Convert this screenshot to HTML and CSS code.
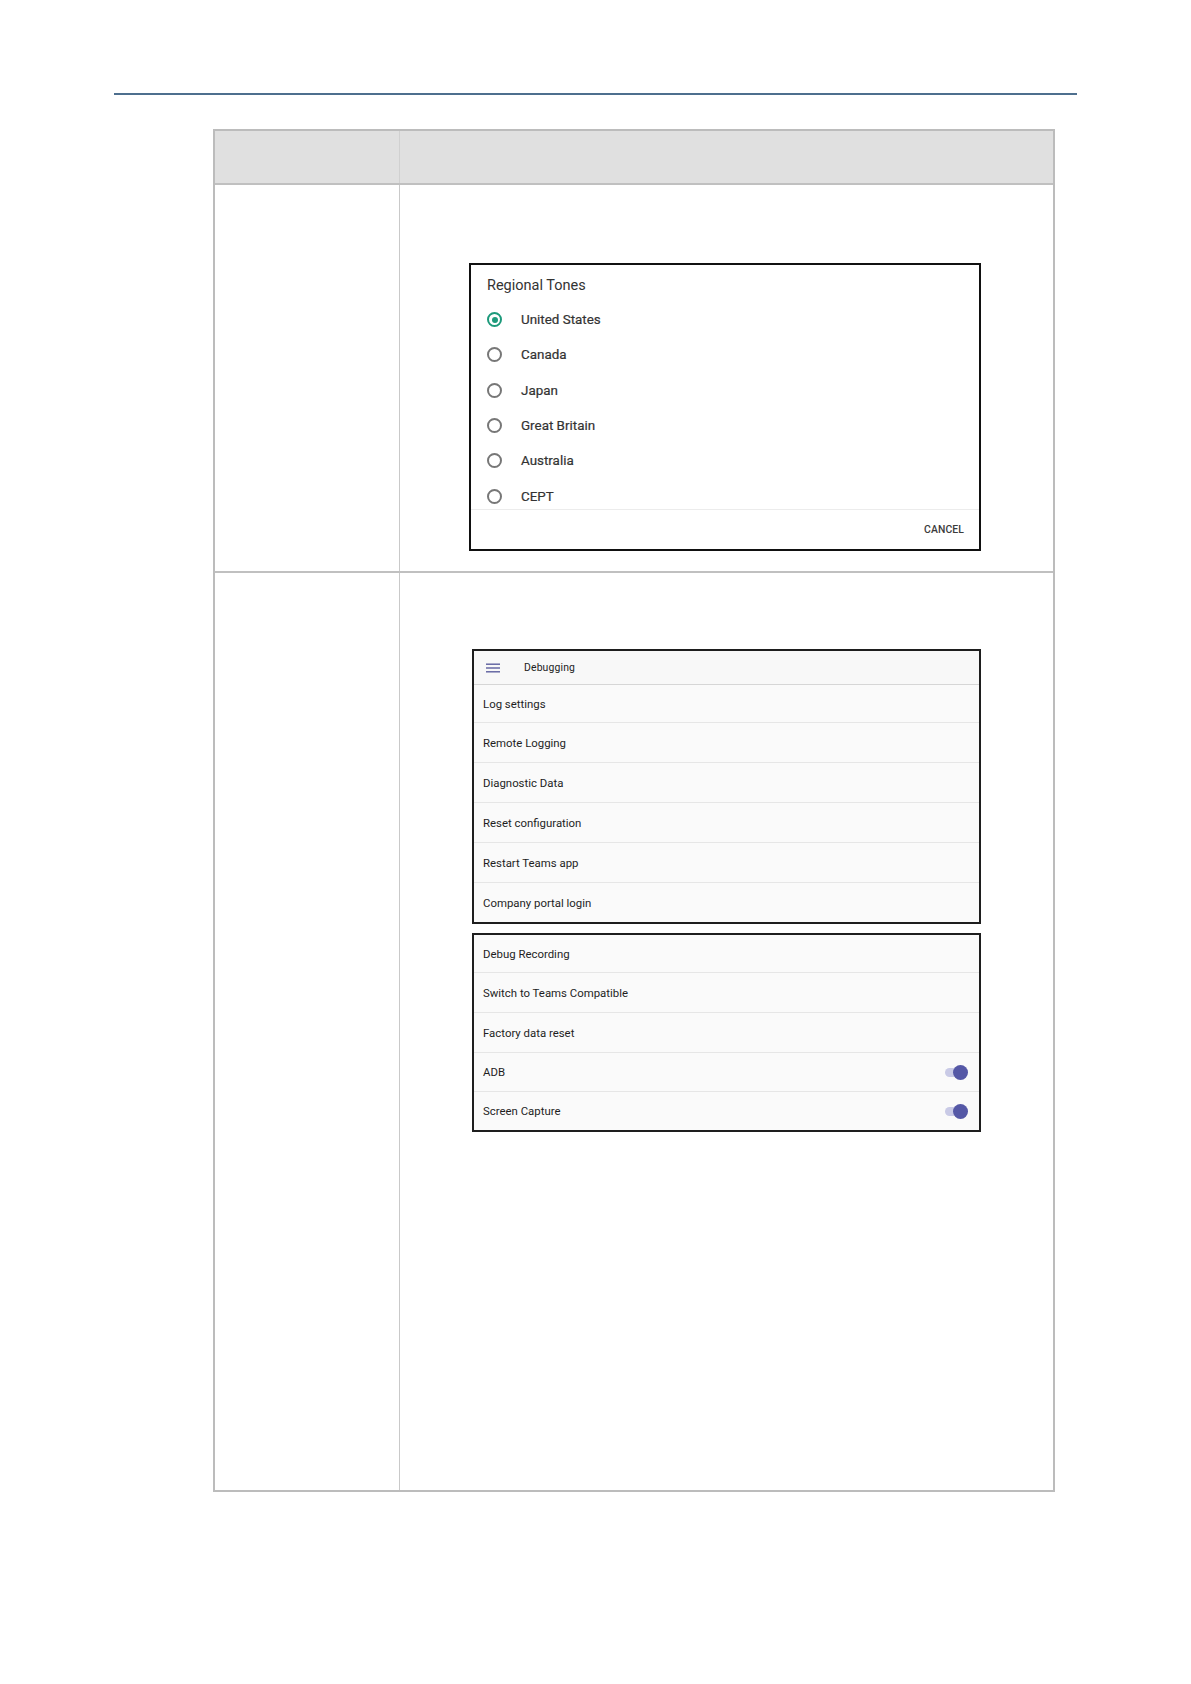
FILE: index.html
```html
<!DOCTYPE html>
<html lang="en">
<head>
<meta charset="utf-8">
<title>Regional Tones / Debugging</title>
<link rel="stylesheet" href="styles.css">
</head>
<body>
<div class="page">
  <div class="rule"></div>
  <div class="table">
    <div class="row head">
      <div class="cell c1"></div>
      <div class="cell c2"></div>
    </div>
    <div class="row r1">
      <div class="cell c1"></div>
      <div class="cell c2">
        <div class="dialog">
          <div class="d-title">Regional Tones</div>
          <div class="d-list">
            <div class="opt"><span class="radio on"></span><span class="opt-text">United States</span></div>
            <div class="opt"><span class="radio"></span><span class="opt-text">Canada</span></div>
            <div class="opt"><span class="radio"></span><span class="opt-text">Japan</span></div>
            <div class="opt"><span class="radio"></span><span class="opt-text">Great Britain</span></div>
            <div class="opt"><span class="radio"></span><span class="opt-text">Australia</span></div>
            <div class="opt"><span class="radio"></span><span class="opt-text">CEPT</span></div>
          </div>
          <div class="d-foot"><span class="cancel">CANCEL</span></div>
        </div>
      </div>
    </div>
    <div class="row r2">
      <div class="cell c1"></div>
      <div class="cell c2">
        <div class="panel">
          <div class="p-head">
            <svg class="burger" width="14" height="10" viewBox="0 0 14 10"><rect x="0" y="0.5" width="14" height="1.4" fill="#5d5f9e"/><rect x="0" y="4.3" width="14" height="1.4" fill="#5d5f9e"/><rect x="0" y="8.1" width="14" height="1.4" fill="#5d5f9e"/></svg>
            <span class="p-title">Debugging</span>
          </div>
          <div class="item first">Log settings</div>
          <div class="item">Remote Logging</div>
          <div class="item">Diagnostic Data</div>
          <div class="item">Reset configuration</div>
          <div class="item">Restart Teams app</div>
          <div class="item last">Company portal login</div>
        </div>
        <div class="panel second">
          <div class="item first">Debug Recording</div>
          <div class="item">Switch to Teams Compatible</div>
          <div class="item">Factory data reset</div>
          <div class="item tall"><span>ADB</span><span class="toggle"><span class="knob"></span></span></div>
          <div class="item last"><span>Screen Capture</span><span class="toggle"><span class="knob"></span></span></div>
        </div>
      </div>
    </div>
  </div>
</div>
</body>
</html>
```

FILE: styles.css
```css
html, body {
  margin: 0;
  padding: 0;
  background: #ffffff;
}

.page {
  width: 1191px;
  min-height: 1684px;
  padding-top: 93px;
  box-sizing: border-box;
  font-family: Roboto, "Liberation Sans", Arial, sans-serif;
}

.rule {
  margin-left: 114px;
  width: 963px;
  height: 2px;
  background: #4e6f8e;
}

.table {
  margin: 34px 0 0 213px;
  width: 842px;
  box-sizing: border-box;
  border: 2px solid #bcbcbc;
}

.row {
  display: grid;
  grid-template-columns: 185px 1fr;
}

.cell.c1 {
  border-right: 1px solid #c9c9c9;
}

.head {
  height: 54px;
  box-sizing: border-box;
  background: #e0e0e0;
  border-bottom: 2px solid #c0c0c0;
}

.head .c1 {
  border-right-color: #d0d0d0;
}

.r1 {
  height: 388px;
  box-sizing: border-box;
  border-bottom: 2px solid #c0c0c0;
}

.r1 .c2 {
  padding: 78px 0 0 69px;
}

.r2 {
  height: 917px;
}

.r2 .c2 {
  padding: 76px 0 0 72px;
}

/* Regional tones dialog */
.dialog {
  width: 512px;
  height: 288px;
  box-sizing: border-box;
  border: 2px solid #111;
  background: #fff;
  display: flex;
  flex-direction: column;
}

.d-title {
  height: 37px;
  box-sizing: border-box;
  padding: 12px 0 0 16px;
  font-size: 14.5px;
  line-height: 18px;
  color: #333;
}

.d-list {
  height: 207px;
  overflow: hidden;
  border-bottom: 1px solid #ececec;
}

.opt {
  height: 35.3px;
  display: flex;
  align-items: center;
  padding-left: 16px;
}

.radio {
  width: 15px;
  height: 15px;
  box-sizing: border-box;
  border: 2px solid #777;
  border-radius: 50%;
  flex: none;
  position: relative;
}

.radio.on {
  border-color: #1d9a7b;
}

.radio.on::after {
  content: "";
  position: absolute;
  left: 2.5px;
  top: 2.5px;
  width: 6px;
  height: 6px;
  border-radius: 50%;
  background: #1d9a7b;
}

.opt-text {
  margin-left: 19px;
  font-size: 13.4px;
  font-weight: 400;
  color: #333;
  -webkit-text-stroke: 0.2px #333;
}

.d-foot {
  flex: 1;
  display: flex;
  align-items: center;
  justify-content: flex-end;
  padding-right: 15px;
}

.cancel {
  font-size: 10.4px;
  font-weight: 500;
  color: #3c3c3c;
  letter-spacing: 0.1px;
}

/* Debugging panels */
.panel {
  width: 509px;
  box-sizing: border-box;
  border: 2px solid #1e1e1e;
  background: #fafafa;
}

.panel.second {
  margin-top: 9px;
}

.p-head {
  height: 34px;
  box-sizing: border-box;
  border-bottom: 1px solid #d6d6d6;
  display: flex;
  align-items: center;
  padding-left: 12px;
  background: #f8f8f8;
}

.burger {
  display: block;
}

.p-title {
  margin-left: 24px;
  font-size: 10.4px;
  letter-spacing: 0.15px;
  color: #222;
}

.item {
  height: 40px;
  box-sizing: border-box;
  border-bottom: 1px solid #e6e6e6;
  display: flex;
  align-items: center;
  justify-content: space-between;
  padding: 0 11px 0 9px;
  font-size: 11.4px;
  color: #1e1e1e;
}

.item.first {
  height: 38px;
}

.item.tall {
  height: 39px;
}

.item.last {
  height: 39px;
  border-bottom: none;
}

.panel.second .item.last {
  height: 38px;
}

.toggle {
  width: 23px;
  height: 15px;
  position: relative;
  display: block;
}

.toggle::before {
  content: "";
  position: absolute;
  left: 0;
  top: 3px;
  width: 18px;
  height: 9px;
  border-radius: 5px;
  background: #c9cae6;
}

.knob {
  position: absolute;
  right: 0;
  top: 0;
  width: 15px;
  height: 15px;
  border-radius: 50%;
  background: #5558a6;
}
```
